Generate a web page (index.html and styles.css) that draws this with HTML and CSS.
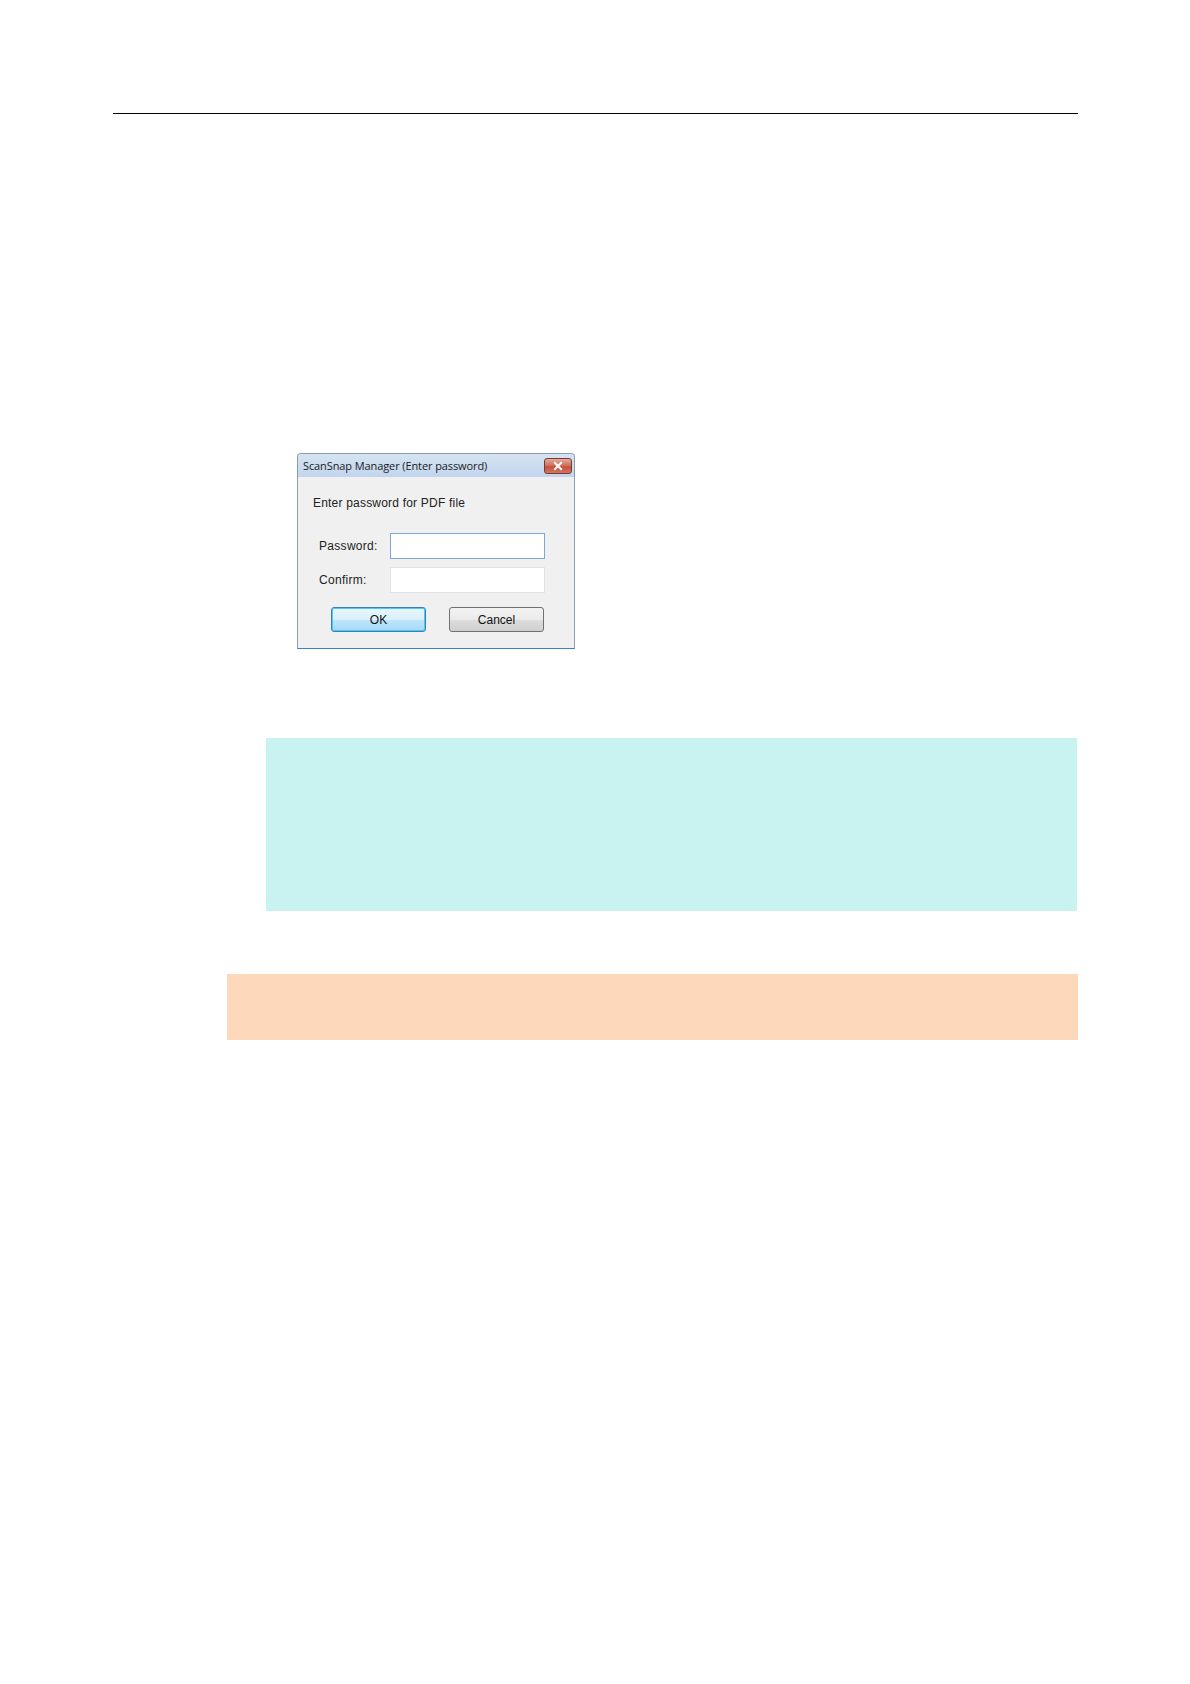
FILE: index.html
```html
<!DOCTYPE html>
<html>
<head>
<meta charset="utf-8">
<title>ScanSnap Manager (Enter password)</title>
<link rel="stylesheet" href="styles.css">
</head>
<body>
<div class="page">
  <hr class="rule">
  <div class="dialog">
    <div class="titlebar">
      <span class="title">ScanSnap Manager (Enter password)</span>
      <span class="close"><svg width="16" height="10" viewBox="0 0 16 10"><path d="M5 2 L11 8 M11 2 L5 8" stroke="#fff" stroke-width="2" stroke-linecap="square"/></svg></span>
    </div>
    <div class="dlg-body">
      <p class="prompt">Enter password for PDF file</p>
      <div class="field-row">
        <span class="label">Password:</span>
        <span class="input focused"></span>
      </div>
      <div class="field-row">
        <span class="label">Confirm:</span>
        <span class="input"></span>
      </div>
      <div class="buttons">
        <span class="btn btn-ok">OK</span>
        <span class="btn btn-cancel">Cancel</span>
      </div>
    </div>
  </div>
  <div class="hint-box"></div>
  <div class="note-box"></div>
</div>
</body>
</html>
```
FILE: styles.css
```css
html, body {
  margin: 0;
  padding: 0;
  background: #fff;
}
.page {
  padding-left: 113px;
  padding-top: 113px;
  width: 965px;
  font-family: "Liberation Sans", Arial, sans-serif;
}
.rule {
  margin: 0;
  border: 0;
  height: 1px;
  background: #000;
}
.dialog {
  margin-top: 339px;
  margin-left: 184px;
  width: 276px;
  height: 194px;
  border: 1px solid #8d9bab;
  border-bottom: 1px solid #3d7fc8;
  border-top-left-radius: 4px;
  border-top-right-radius: 4px;
  background: #f0f0f0;
  display: flex;
  flex-direction: column;
}
.titlebar {
  height: 23px;
  background: linear-gradient(#d5e4f4, #c1d5ec);
  display: flex;
  align-items: center;
  justify-content: space-between;
  padding: 0 2px 0 5px;
  border-top-left-radius: 3px;
  border-top-right-radius: 3px;
}
.title {
  font-family: "Open Sans", "Noto Sans", sans-serif;
  font-size: 11px;
  color: #1b1b1b;
  letter-spacing: -0.1px;
}
.close {
  width: 26px;
  height: 14px;
  border: 1px solid #7a3a30;
  border-radius: 3px;
  background: linear-gradient(#e2ab9f, #cf6b58 50%, #c4513c 55%, #d37662);
  display: flex;
  align-items: center;
  justify-content: center;
}
.dlg-body {
  padding: 18px 0 0 15px;
  font-size: 12px;
  color: #222;
}
.prompt {
  margin: 0 0 22px 0;
  height: 16px;
  line-height: 16px;
  letter-spacing: 0.2px;
}
.field-row {
  display: flex;
  align-items: center;
  height: 26px;
  margin-bottom: 8px;
}
.label {
  width: 71px;
  padding-left: 6px;
  letter-spacing: 0.3px;
}
.input {
  width: 153px;
  height: 24px;
  background: #fff;
  border: 1px solid #dfe3e8;
}
.input.focused {
  border-color: #7ba8d6;
}
.buttons {
  display: flex;
  gap: 23px;
  margin-top: 14px;
  padding-left: 18px;
}
.btn {
  width: 93px;
  height: 23px;
  border-radius: 3px;
  display: flex;
  align-items: center;
  justify-content: center;
  font-size: 12px;
  color: #111;
}
.btn-ok {
  border: 1px solid #3c7fb1;
  background: linear-gradient(#eaf6fd, #d9f0fc 50%, #bee6fd 51%, #a7d9f5);
  box-shadow: inset 0 0 0 1px #48cbf7;
}
.btn-cancel {
  border: 1px solid #707070;
  background: linear-gradient(#f2f2f2, #ebebeb 50%, #dddddd 51%, #cfcfcf);
}
.hint-box {
  margin-top: 89px;
  margin-left: 153px;
  width: 811px;
  height: 173px;
  background: #c8f3f0;
}
.note-box {
  margin-top: 63px;
  margin-left: 114px;
  width: 851px;
  height: 66px;
  background: #fdd8bb;
}
```
